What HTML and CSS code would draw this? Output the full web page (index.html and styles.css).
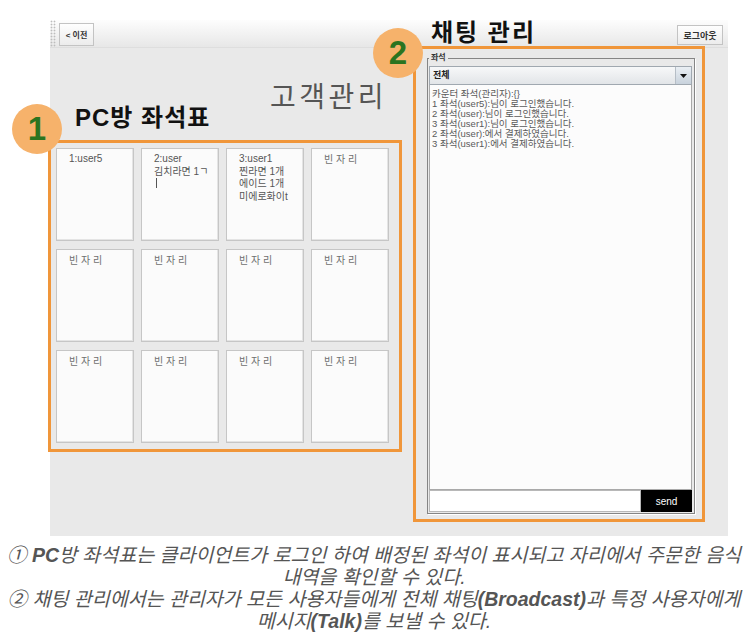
FILE: index.html
```html
<!DOCTYPE html>
<html lang="ko">
<head>
<meta charset="utf-8">
<title>고객관리</title>
<link rel="stylesheet" href="styles.css">
</head>
<body>
<div class="window">
  <div class="topbar">
    <div class="grip"></div>
    <button class="btn back">&lt; 이전</button>
    <h2 class="chat-title">채팅 관리</h2>
    <button class="btn logout">로그아웃</button>
  </div>
  <div class="main">
    <section class="left">
      <h1 class="big-title">고객관리</h1>
      <h2 class="seat-title">PC방 좌석표</h2>
      <div class="seat-box">
        <span class="badge b1">1</span>
        <div class="grid">
          <div class="card">1:user5</div>
          <div class="card">2:user<br>김치라면 1ㄱ<br><span class="caret"></span></div>
          <div class="card">3:user1<br>찐라면 1개<br>에이드 1개<br>미에로화이t</div>
          <div class="card empty">빈 자 리</div>
          <div class="card empty">빈 자 리</div>
          <div class="card empty">빈 자 리</div>
          <div class="card empty">빈 자 리</div>
          <div class="card empty">빈 자 리</div>
          <div class="card empty">빈 자 리</div>
          <div class="card empty">빈 자 리</div>
          <div class="card empty">빈 자 리</div>
          <div class="card empty">빈 자 리</div>
        </div>
      </div>
    </section>
    <section class="right">
      <div class="chat-box">
        <span class="badge b2">2</span>
        <fieldset class="group">
          <legend>좌석</legend>
          <div class="combo">
            <span class="combo-value">전체</span>
            <span class="combo-arrow"><svg width="7" height="4" viewBox="0 0 7 4"><path d="M0 0H7L3.5 4Z" fill="#111"/></svg></span>
          </div>
          <div class="log">
            <div>카운터 좌석(관리자):{}</div>
            <div>1 좌석(user5):님이 로그인했습니다.</div>
            <div>2 좌석(user):님이 로그인했습니다.</div>
            <div>3 좌석(user1):님이 로그인했습니다.</div>
            <div>2 좌석(user):에서 결제하였습니다.</div>
            <div>3 좌석(user1):에서 결제하였습니다.</div>
          </div>
          <div class="input-row">
            <div class="input"></div>
            <button class="send">send</button>
          </div>
        </fieldset>
      </div>
    </section>
  </div>
</div>
<div class="caption">
  ① <b>PC</b>방 좌석표는 클라이언트가 로그인 하여 배정된 좌석이 표시되고 자리에서 주문한 음식<br>
  내역을 확인할 수 있다.<br>
  ② 채팅 관리에서는 관리자가 모든 사용자들에게 전체 채팅<b>(Broadcast)</b>과 특정 사용자에게<br>
  메시지<b>(Talk)</b>를 보낼 수 있다.
</div>
</body>
</html>
```

FILE: styles.css
```css
* { box-sizing: border-box; }
html, body { margin: 0; padding: 0; background: #fff; }
body {
  font-family: "Liberation Sans", "Noto Sans CJK KR", sans-serif;
  color: #333;
  width: 748px;
  height: 640px;
  overflow: hidden;
}
.window {
  margin: 20px 0 0 50px;
  width: 678px;
  height: 516px;
  background: #e9e9e9;
}
.topbar {
  display: flex;
  align-items: flex-start;
  height: 28px;
  background: linear-gradient(#fdfdfd, #e7e7e7);
  border-bottom: 1px solid #dedede;
}
.grip {
  width: 6px;
  height: 27px;
  background-image: radial-gradient(circle, #bdbdbd 0.8px, transparent 1.1px);
  background-size: 3px 3px;
}
.btn {
  font-family: inherit;
  padding: 0;
  margin: 0;
  border: 1px solid #c3c3c3;
  background: linear-gradient(#fefefe, #ececec);
  color: #333;
  font-weight: bold;
  font-size: 8px;
}
.back { width: 35px; height: 23px; margin: 3px 0 0 3px; }
.chat-title {
  margin: 1px 0 0 337px;
  font-size: 24px;
  line-height: 24px;
  font-weight: bold;
  letter-spacing: 2px;
  color: #111;
}
.logout { margin: 5px 5px 0 auto; width: 46px; height: 20px; font-size: 9px; }
.main { display: flex; }
.left { width: 363px; }
.big-title {
  margin: 36px 0 -6px 220px;
  font-size: 28px;
  line-height: 28px;
  font-weight: normal;
  color: #555;
  letter-spacing: 3.5px;
}
.seat-title {
  margin: 0 0 10px 25px;
  font-size: 24px;
  line-height: 24px;
  font-weight: bold;
  letter-spacing: 1px;
  color: #111;
}
.seat-box {
  position: relative;
  margin-left: -2px;
  width: 354px;
  border: 3px solid #f0963a;
  padding: 5px 10px 6px 5px;
}
.grid {
  display: grid;
  grid-template-columns: repeat(4, 78px);
  grid-auto-rows: 93px;
  column-gap: 7px;
  row-gap: 8px;
}
.card {
  background: #fbfbfb;
  border: 1px solid #c6c6c6;
  box-shadow: inset -1px -1px 0 #e4e4e4;
  padding: 4px 0 0 12px;
  font-size: 10px;
  line-height: 12.5px;
  color: #555;
  white-space: nowrap;
  overflow: hidden;
}
.card.empty { color: #6f6f6f; padding-top: 5px; }
.caret {
  display: inline-block;
  width: 1px;
  height: 10px;
  background: #555;
  margin-left: 2px;
}
.right { width: 292px; }
.chat-box {
  position: relative;
  margin-top: -2px;
  width: 292px;
  height: 476px;
  border: 3px solid #f0963a;
  padding: 4px 7px 5px 11px;
}
.group {
  margin: 0;
  padding: 3px 2px 1px 1px;
  border: 1px solid #858585;
  box-shadow: 1px 1px 0 #fff;
  min-width: 0;
}
.group legend {
  padding: 0 2px;
  font-size: 8px;
  line-height: 10px;
  color: #333;
  font-weight: bold;
}
.combo {
  display: flex;
  height: 19px;
  border: 1px solid #a0a8b0;
  background: linear-gradient(#f7f8f9, #e2e5e8);
}
.combo-value {
  flex: 1;
  font-size: 9px;
  font-weight: bold;
  line-height: 17px;
  padding-left: 3px;
  color: #222;
}
.combo-arrow {
  width: 16px;
  border-left: 1px solid #b6bec6;
  background: linear-gradient(#eaeff4, #c8d2dc);
  display: flex;
  align-items: center;
  justify-content: center;
}
.log {
  height: 405px;
  background: #fcfcfc;
  border: 1px solid #a9a9a9;
  border-top: none;
  padding: 4px 2px;
  font-size: 9.5px;
  line-height: 10px;
  color: #5a5a5a;
}
.input-row { display: flex; height: 22px; }
.input { flex: 1; background: #fff; border: 1px solid #b8b8b8; }
.send {
  width: 51px;
  margin: 0;
  background: #000;
  color: #fff;
  font-family: "Liberation Sans", sans-serif;
  font-size: 10px;
  border: none;
}
.badge {
  position: absolute;
  width: 50px;
  height: 50px;
  border-radius: 50%;
  background: #f6b26b;
  color: #2b7420;
  font: bold 33px/50px "Liberation Sans", sans-serif;
  text-align: center;
  z-index: 2;
}
.b1 { left: -39px; top: -39px; }
.b2 { left: -43px; top: -21px; }
.caption {
  margin-top: 8px;
  text-align: center;
  white-space: nowrap;
  font-style: italic;
  font-size: 19.5px;
  line-height: 22px;
  color: #555;
  font-family: "Liberation Sans Narrow", "Liberation Sans", "Noto Sans CJK KR", sans-serif;
}
.caption b { font-weight: bold; }
```
